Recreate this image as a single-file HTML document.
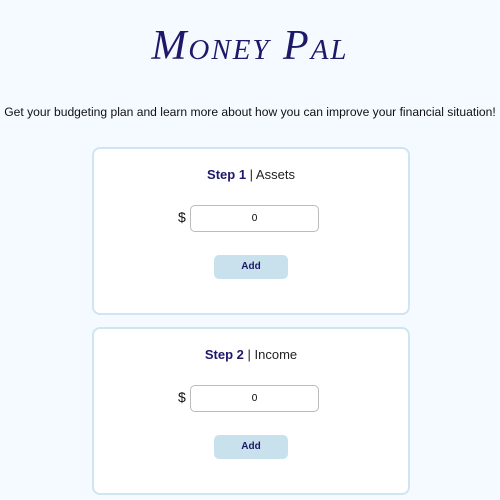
<!DOCTYPE html>
<html><head><style>
body{margin:0;background:#f4faff;font-family:"Liberation Sans",sans-serif;width:500px;height:500px;overflow:hidden;position:relative}
.title{position:absolute;top:18px;left:0;width:500px;text-align:center;font-family:"Liberation Serif",serif;font-style:italic;font-variant:small-caps;font-size:42px;color:#1e1868;letter-spacing:2px;line-height:56px}
.sub{position:absolute;top:105px;left:0;width:500px;text-align:center;font-size:12.1px;color:#111;white-space:nowrap}
.card{position:absolute;left:92px;width:314px;height:164px;border:2px solid #cfe5ef;border-radius:8px;background:#fff}
.h{position:absolute;top:18px;width:100%;text-align:center;font-size:13px;color:#222}
.h b{color:#1e1868;font-weight:bold}
.d{position:absolute;left:84px;top:60px;font-size:14px;color:#111}
.in{position:absolute;left:96px;top:56px;width:127px;height:25px;border:1px solid #bbb;border-radius:5px;background:#fff;text-align:center;font-size:10px;line-height:25px}
.btn{position:absolute;left:120px;top:106px;width:74px;height:24px;border-radius:5px;background:#c8e1ec;text-align:center;line-height:24px;font-size:10px;color:#1e1868;font-weight:bold}
</style></head><body>
<div class="title">Money Pal</div>
<div class="sub">Get your budgeting plan and learn more about how you can improve your financial situation!</div>
<div class="card" style="top:147px"><div class="h"><b>Step 1</b> | Assets</div><div class="d">$</div><div class="in">0</div><div class="btn">Add</div></div>
<div class="card" style="top:327px"><div class="h"><b>Step 2</b> | Income</div><div class="d">$</div><div class="in">0</div><div class="btn">Add</div></div>
</body></html>
